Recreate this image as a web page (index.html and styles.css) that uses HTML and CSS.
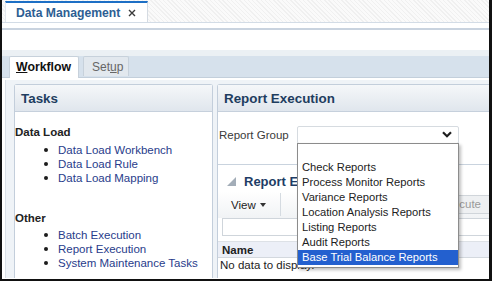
FILE: index.html
```html
<!DOCTYPE html>
<html lang="en">
<head>
    <meta charset="UTF-8">
    <title>Data Management</title>
    <link rel="stylesheet" href="styles.css">
</head>
<body>
<div class="frame">
    <div class="doc-tabs">
        <div class="doc-tab">
            <span class="doc-title">Data Management</span>
            <svg class="close" width="8" height="8" viewBox="0 0 8 8"><path d="M1 1L7 7M7 1L1 7" stroke="#3a3a3a" stroke-width="1.4"/></svg>
        </div>
    </div>
    <div class="strip"></div>
    <div class="blank"></div>
    <div class="sub-top"></div>
    <div class="sub-tabs">
        <div class="sub-tab active"><u>W</u>orkflow</div>
        <div class="sub-tab">Set<u>u</u>p</div>
    </div>
    <div class="work">
        <div class="panel tasks">
            <div class="panel-head">Tasks</div>
            <div class="panel-body">
                <div class="group">Data Load</div>
                <ul class="links first">
                    <li>Data Load Workbench</li>
                    <li>Data Load Rule</li>
                    <li>Data Load Mapping</li>
                </ul>
                <div class="group other">Other</div>
                <ul class="links">
                    <li>Batch Execution</li>
                    <li>Report Execution</li>
                    <li>System Maintenance Tasks</li>
                </ul>
            </div>
        </div>
        <div class="panel exec">
            <div class="panel-head">Report Execution</div>
            <div class="exec-body">
                <div class="field">
                    <label class="field-label">Report Group</label>
                    <div class="select">
                        <svg class="chev" width="10" height="7" viewBox="0 0 10 7"><path d="M1 1.2L5 5.2L9 1.2" fill="none" stroke="#1e1e1e" stroke-width="2.2"/></svg>
                        <ul class="dropdown">
                            <li>&nbsp;</li>
                            <li>Check Reports</li>
                            <li>Process Monitor Reports</li>
                            <li>Variance Reports</li>
                            <li>Location Analysis Reports</li>
                            <li>Listing Reports</li>
                            <li>Audit Reports</li>
                            <li class="picked">Base Trial Balance Reports</li>
                        </ul>
                    </div>
                </div>
                <div class="results">
                    <div class="res-head"><span class="tri"></span>Report Execution</div>
                    <div class="res-tools">
                        <span class="view">View <span class="caret"></span></span>
                        <span class="sep"></span>
                        <span class="btn">Execute</span>
                    </div>
                    <div class="filter"><span class="filter-box"></span></div>
                    <div class="col-head">Name</div>
                    <div class="empty">No data to display.</div>
                </div>
            </div>
        </div>
    </div>
</div>
</body>
</html>
```

FILE: styles.css
```css
* {
    margin: 0;
    padding: 0;
    box-sizing: border-box;
}

body {
    font-family: "Liberation Sans", Arial, sans-serif;
    background: #fff;
}

.frame {
    width: 492px;
    height: 281px;
    border-left: 2px solid #111;
    border-right: 3px solid #111;
    border-bottom: 2px solid #111;
    overflow: hidden;
    background: #fff;
}

.doc-tabs {
    height: 23px;
    border-bottom: 1px solid #d3dce6;
    background: repeating-linear-gradient(45deg, #f0f0f0 0 1px, #fafafa 1px 3px);
    display: flex;
    align-items: flex-end;
}

.doc-tab {
    margin-left: 3px;
    width: 143px;
    height: 21px;
    background: #fff;
    border-top: 2px solid #1d6fc5;
    border-left: 1px solid #e3e8ee;
    border-right: 1px solid #d5dbe2;
    display: flex;
    align-items: center;
    padding-left: 10px;
}

.doc-title {
    font-size: 12.2px;
    font-weight: bold;
    color: #2d5e93;
}

.close {
    margin-left: 8px;
}

.strip {
    height: 7px;
    border-bottom: 2px solid #c9d3df;
}

.blank {
    height: 20px;
}

.sub-top {
    height: 6px;
    background: #ebf0f4;
}

.sub-tabs {
    height: 22px;
    background: #d6e1ec;
    border-bottom: 1px solid #c3cfdb;
    display: flex;
    align-items: flex-end;
    padding-left: 7px;
    gap: 4px;
}

.sub-tab {
    height: 20px;
    padding: 0 5px 0 8px;
    font-size: 12px;
    line-height: 20px;
    color: #666;
    background: #e2e8ee;
    border: 1px solid #c7d1db;
    border-bottom: none;
    border-radius: 2px 2px 0 0;
    margin-bottom: 1px;
}

.sub-tab.active {
    width: 70px;
    height: 22px;
    margin-bottom: -1px;
    background: #fff;
    color: #111;
    font-weight: bold;
    font-size: 12.3px;
    line-height: 21px;
    padding-left: 6px;
}

.work {
    height: 200px;
    border-top: 2px solid #fff;
    background: linear-gradient(to right, #fff 0 3px, #d9e0e7 3px 4px, #eff3f7 4px);
    padding: 4px 0 0 12px;
    display: grid;
    grid-template-columns: 199px 300px;
    gap: 4px;
}

.panel {
    background: #fff;
    border: 1px solid #c3cedb;
    border-bottom: none;
    border-radius: 3px 3px 0 0;
}

.panel-head {
    height: 27px;
    border-bottom: 1px solid #c6d0dc;
    background: linear-gradient(#f5f7f9, #e0e6ed);
    font-size: 13.4px;
    font-weight: bold;
    color: #1e3d5f;
    line-height: 27px;
    padding-left: 6px;
}

.panel-body {
    padding: 13px 0 0 0;
}

.group {
    font-size: 11.5px;
    font-weight: bold;
    color: #222;
    line-height: 14px;
}

.group.other {
    margin-top: 26px;
}

.links {
    list-style: none;
    margin-top: 3px;
}

.links.first {
    margin-top: 4px;
}

.links li {
    display: flex;
    align-items: center;
    font-size: 11.5px;
    line-height: 14px;
    color: #283c8b;
}

.links li::before {
    content: "";
    width: 4px;
    height: 4px;
    border-radius: 50%;
    background: #1c1c1c;
    margin: 0 10px 0 29px;
}

.exec-body {
    padding-top: 14px;
}

.field {
    display: flex;
    align-items: center;
    padding-left: 1px;
}

.field-label {
    width: 78px;
    font-size: 11.5px;
    color: #3a3a3a;
}

.select {
    position: relative;
    width: 162px;
    height: 18px;
    border: 1px solid #d6dbe0;
    border-radius: 2px;
    background: #fff;
}

.chev {
    position: absolute;
    right: 6px;
    top: 4px;
}

.dropdown {
    position: absolute;
    left: -1px;
    top: 16px;
    width: 162px;
    list-style: none;
    background: #fff;
    border: 1px solid #8c8c8c;
    box-shadow: 2px 2px 3px rgba(0, 0, 0, 0.25);
    padding: 1px 0 2px;
    z-index: 5;
}

.dropdown li {
    height: 15px;
    line-height: 15px;
    font-size: 11.2px;
    color: #222;
    padding-left: 4px;
}

.dropdown li.picked {
    background: #2360cf;
    color: #fff;
}

.results {
    margin-top: 20px;
    border-top: 1px solid #c9d3de;
}

.res-head {
    height: 26px;
    display: flex;
    align-items: center;
    padding-left: 9px;
    font-size: 13px;
    font-weight: bold;
    color: #1e3d66;
    padding-top: 6px;
}

.tri {
    width: 0;
    height: 0;
    border-left: 9px solid transparent;
    border-bottom: 9px solid #a3adb8;
    margin-right: 8px;
}

.res-tools {
    height: 27px;
    display: flex;
    align-items: center;
    background: linear-gradient(#fff, #f1f3f5);
    padding-left: 13px;
}

.view {
    font-size: 11.5px;
    color: #222;
    width: 49px;
    display: flex;
    align-items: center;
}

.caret {
    width: 0;
    height: 0;
    border-left: 3.5px solid transparent;
    border-right: 3.5px solid transparent;
    border-top: 4px solid #333;
    margin-left: 4px;
}

.sep {
    width: 1px;
    height: 23px;
    background: #d5dbe1;
}

.btn {
    margin-left: auto;
    margin-right: 24px;
    height: 19px;
    padding: 0 10px;
    font-size: 11.5px;
    line-height: 17px;
    color: #9a9a9a;
    background: #eef0f2;
    border: 1px solid #d0d5da;
    border-radius: 2px;
}

.filter {
    height: 22px;
    padding: 0 0 0 4px;
}

.filter-box {
    display: block;
    height: 18px;
    border: 1px solid #cfd5db;
    background: #fff;
}

.col-head {
    height: 17px;
    margin-top: 1px;
    border-top: 1px solid #dde1e6;
    border-bottom: 1px solid #d3d8de;
    background: #eceff7;
    font-size: 11.5px;
    font-weight: bold;
    color: #222;
    line-height: 16px;
    padding-left: 4px;
}

.empty {
    font-size: 11.5px;
    color: #222;
    line-height: 15px;
    padding-left: 2px;
}
```
